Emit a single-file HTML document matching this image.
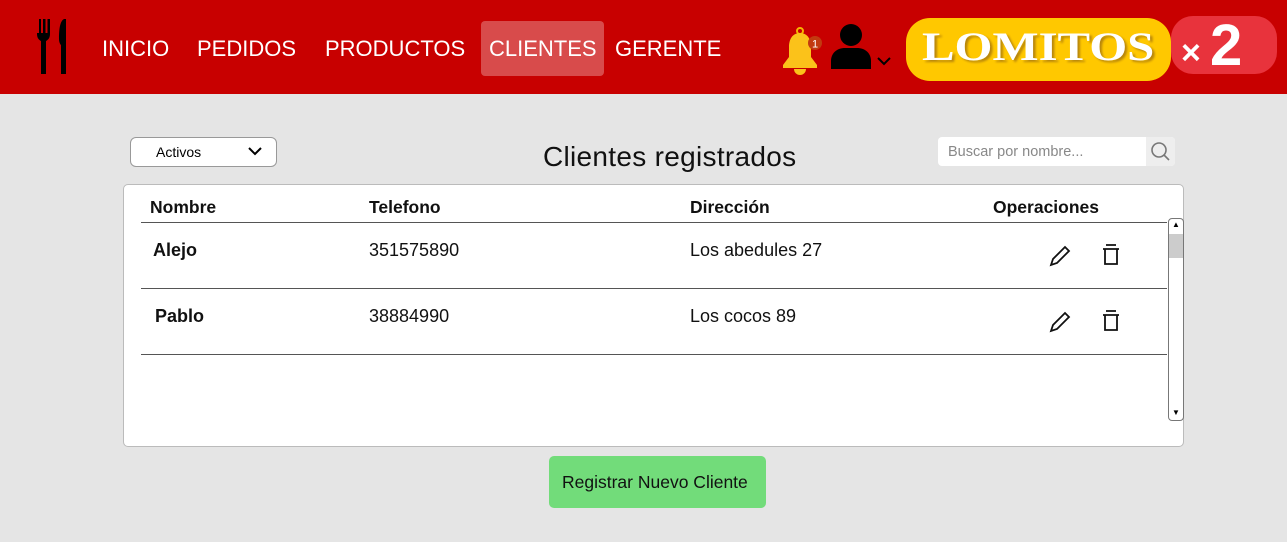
<!DOCTYPE html>
<html><head><meta charset="utf-8"><style>
*{margin:0;padding:0;box-sizing:border-box}
body{width:1287px;height:542px;background:#e5e5e5;font-family:"Liberation Sans",sans-serif;position:relative;overflow:hidden}
.hdr{position:absolute;left:0;top:0;width:1287px;height:94px;background:#c80000}
.nav{position:absolute;top:36px;color:#fff;font-size:22px}
.abs{position:absolute}
.th{position:absolute;top:197px;font-size:17.5px;font-weight:bold;color:#111}
.td{position:absolute;font-size:18px;color:#111}
.line{position:absolute;left:141px;width:1026px;height:1px;background:#555}
</style></head><body>
<div class="hdr"></div>
<svg class="abs" style="left:36px;top:19px" width="34" height="56" viewBox="0 0 34 56">
<path d="M1 0v15c0 4 2 6 4 7v33h5V22c2-1 4-3 4-7V0h-2.5v14h-2V0H7v14H5V0H3v14H1z" fill="#000"/>
<path d="M28 0c-4 2-5 10-5 20 0 3 1 5 2 6v29h5V0z" fill="#000"/>
</svg>
<div class="nav" style="left:102px">INICIO</div>
<div class="nav" style="left:197px">PEDIDOS</div>
<div class="nav" style="left:325px">PRODUCTOS</div>
<div class="abs" style="left:481px;top:21px;width:123px;height:55px;background:#d84b4b;border-radius:4px"></div>
<div class="nav" style="left:489px">CLIENTES</div>
<div class="nav" style="left:615px">GERENTE</div>
<svg class="abs" style="left:779px;top:27px" width="46" height="48" viewBox="0 0 46 48">
<circle cx="21" cy="4" r="3" fill="none" stroke="#f7b500" stroke-width="2"/>
<path d="M21 6c-8 0-11 7-11 14v10l-6 8v3h34v-3l-6-8V20c0-7-3-14-11-14z" fill="#fbc21a"/>
<path d="M15 42a6 6 0 0 0 12 0z" fill="#fbc21a"/>
<circle cx="36" cy="16" r="7" fill="#c23a10"/>
<text x="36" y="20.5" font-size="11" fill="#fff" text-anchor="middle" font-family="Liberation Sans">1</text>
</svg>
<svg class="abs" style="left:829px;top:22px" width="70" height="52" viewBox="0 0 70 52">
<circle cx="22" cy="13" r="11" fill="#000"/>
<path d="M2 47v-8c0-8 6-13 14-13h12c8 0 14 5 14 13v8z" fill="#000"/>
<path d="M49 36l6 6 6-6" fill="none" stroke="#000" stroke-width="2"/>
</svg>
<div class="abs" style="left:1171px;top:16px;width:106px;height:58px;background:#e8333c;border-radius:22px"></div>
<div class="abs" style="left:906px;top:18px;width:265px;height:63px;background:#ffc800;border-radius:24px"></div>
<div class="abs" style="left:922px;top:25px;font-size:40px;line-height:44px;font-weight:900;color:#fff;font-family:'Liberation Serif',serif;transform:scaleX(1.22);transform-origin:left;text-shadow:2px 2px 2px #b8860b">LOMITOS</div>
<div class="abs" style="left:1181px;top:34px;font-size:34px;font-weight:900;color:#fff">×</div>
<div class="abs" style="left:1210px;top:12px;font-size:58px;font-weight:900;color:#fff">2</div>

<div class="abs" style="left:130px;top:137px;width:147px;height:30px;background:#fff;border:1px solid #999;border-radius:6px"></div>
<div class="abs" style="left:156px;top:144px;font-size:14px">Activos</div>
<svg class="abs" style="left:248px;top:146px" width="14" height="10"><path d="M1 2l6 6 6-6" fill="none" stroke="#000" stroke-width="2"/></svg>
<div class="abs" style="left:543px;top:141px;font-size:28px;color:#111;letter-spacing:0.3px">Clientes registrados</div>
<div class="abs" style="left:938px;top:137px;width:237px;height:29px;background:#fff;border-radius:4px"></div>
<div class="abs" style="left:1146px;top:137px;width:29px;height:29px;background:#eee;border-radius:0 4px 4px 0"></div>
<div class="abs" style="left:948px;top:144px;font-size:14.5px;color:#888">Buscar por nombre...</div>
<svg class="abs" style="left:1150px;top:141px" width="22" height="22"><circle cx="9" cy="9" r="7" fill="none" stroke="#777" stroke-width="1.6"/><path d="M14 14l5 5" stroke="#777" stroke-width="1.6"/></svg>

<div class="abs" style="left:123px;top:184px;width:1061px;height:263px;background:#fff;border:1px solid #bbb;border-radius:5px"></div>
<div class="th" style="left:150px">Nombre</div>
<div class="th" style="left:369px">Telefono</div>
<div class="th" style="left:690px">Dirección</div>
<div class="th" style="left:993px">Operaciones</div>
<div class="line" style="top:222px"></div>
<div class="line" style="top:288px"></div>
<div class="line" style="top:354px"></div>
<div class="td" style="left:153px;top:240px;font-weight:bold">Alejo</div>
<div class="td" style="left:369px;top:240px">351575890</div>
<div class="td" style="left:690px;top:240px">Los abedules 27</div>
<div class="td" style="left:155px;top:306px;font-weight:bold">Pablo</div>
<div class="td" style="left:369px;top:306px">38884990</div>
<div class="td" style="left:690px;top:306px">Los cocos 89</div>
<svg class="abs" style="left:1048px;top:243px" width="75" height="100" viewBox="0 0 75 100">
<g fill="none" stroke="#111" stroke-width="1.8">
<path d="M3 22l2-6L17 4l4 4L9 20z"/>
<path d="M58 2h10M55 6h16M57 6v15h12V6"/>
<g transform="translate(0 66)"><path d="M3 22l2-6L17 4l4 4L9 20z"/><path d="M58 2h10M55 6h16M57 6v15h12V6"/></g>
</g></svg>
<div class="abs" style="left:1168px;top:218px;width:16px;height:203px;border:1px solid #777;border-radius:4px;background:#fff"></div>
<div class="abs" style="left:1169px;top:234px;width:14px;height:24px;background:#ccc"></div>
<div class="abs" style="left:1172px;top:220px;font-size:8px">▲</div>
<div class="abs" style="left:1172px;top:408px;font-size:8px">▼</div>

<div class="abs" style="left:549px;top:456px;width:217px;height:52px;background:#72dc7a;border-radius:5px"></div>
<div class="abs" style="left:562px;top:472px;font-size:17.5px;color:#111">Registrar Nuevo Cliente</div>
</body></html>
